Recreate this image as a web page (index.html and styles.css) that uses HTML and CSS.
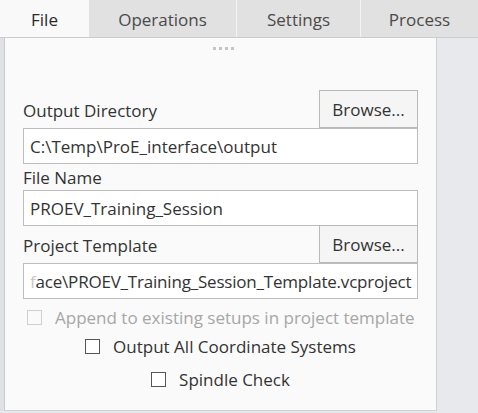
FILE: index.html
```html
<!DOCTYPE html>
<html lang="en">
<head>
    <meta charset="UTF-8">
    <title>Export Settings</title>
    <link rel="stylesheet" href="styles.css">
</head>
<body>

<!-- Tab bar -->
<div class="tabs">
    <div class="tab active tab-file">File</div>
    <div class="tab tab-ops">Operations</div>
    <div class="tab tab-settings">Settings</div>
    <div class="tab tab-process">Process</div>
</div>

<div class="main">
    <div class="strip"></div>
    <div class="panel">
        <!-- Grip -->
        <div class="grip"><span></span><span></span><span></span><span></span></div>

        <div class="row">
            <span class="label">Output Directory</span>
            <button class="browse" type="button">Browse...</button>
        </div>
        <div class="field">C:\Temp\ProE_interface\output</div>

        <div class="row row-plain">
            <span class="label">File Name</span>
        </div>
        <div class="field">PROEV_Training_Session</div>

        <div class="row">
            <span class="label">Project Template</span>
            <button class="browse" type="button">Browse...</button>
        </div>
        <div class="field tight"><span class="cut">f</span>ace\PROEV_Training_Session_Template.vcproject</div>

        <div class="check disabled">
            <span class="box"></span>
            <span>Append to existing setups in project template</span>
        </div>
        <div class="check centered first">
            <span class="box"></span>
            <span>Output All Coordinate Systems</span>
        </div>
        <div class="check centered last">
            <span class="box"></span>
            <span>Spindle Check</span>
        </div>
    </div>
</div>

</body>
</html>
```

FILE: styles.css
```css
body {
    margin: 0;
    font-family: "Open Sans", "Noto Sans", sans-serif;
    background-color: #e8e9ec;
    color: #333;
    width: 478px;
    height: 413px;
    overflow: hidden;
}
.tabs {
    display: flex;
    height: 37px;
    border-bottom: 1px solid #c9cdd1;
    background-color: #e1e1e1;
}
.tab {
    display: flex;
    align-items: center;
    justify-content: center;
    font-size: 17px;
    color: #4a4a4a;
    padding-top: 2px;
    box-sizing: border-box;
}
.tab.active {
    background-color: #f9f9f9;
    color: #2a2a2a;
}
.tab-file { width: 89px; }
.tab-ops { width: 148px; border-right: 1px solid #f4f4f4; }
.tab-settings { width: 124px; border-right: 1px solid #f4f4f4; }
.tab-process { flex: 1; }
.main {
    display: flex;
}
.strip {
    width: 4px;
    height: 373px;
    background-color: #dfe1e4;
    border-right: 1px solid #c8ccd0;
}
.panel {
    width: 432px;
    height: 373px;
    box-sizing: border-box;
    background-color: #fafafa;
    border-right: 1px solid #cfd2d5;
    border-bottom: 1px solid #cfd2d5;
    padding: 0 18px 0 18px;
}
.grip {
    display: flex;
    justify-content: center;
    gap: 3px;
    height: 53px;
    padding-top: 9px;
    box-sizing: border-box;
    padding-left: 6px;
}
.grip span {
    width: 3px;
    height: 3px;
    background-color: #c4c4c4;
}
.row {
    display: flex;
    align-items: center;
    justify-content: space-between;
    height: 37px;
}
.row-plain {
    height: 26px;
    align-items: flex-end;
    padding-bottom: 1px;
    box-sizing: border-box;
}
.label {
    font-size: 17px;
    color: #333;
    padding-top: 2px;
}
.browse {
    width: 99px;
    height: 38px;
    margin-top: 0;
    font-family: inherit;
    font-size: 17px;
    color: #333;
    background-color: #f5f5f5;
    border: 1px solid #b9b9b9;
    padding: 0;
    align-self: flex-end;
}
.field {
    height: 36px;
    box-sizing: border-box;
    border: 1px solid #bdbdbd;
    background-color: #ffffff;
    font-size: 17px;
    color: #333;
    padding: 0 0 0 6px;
    display: flex;
    align-items: center;
    white-space: nowrap;
    overflow: hidden;
}
.field.tight {
    letter-spacing: -0.2px;
}
.cut {
    color: #c8c8c8;
}
.check {
    display: flex;
    align-items: center;
    gap: 13px;
    font-size: 17px;
    color: #333;
    height: 30px;
}
.check.disabled {
    color: #a6a6a6;
    padding-left: 4px;
    margin-top: 3px;
}
.check.centered {
    justify-content: center;
}
.check.first {
    height: 28px;
}
.check.last {
    margin-top: 4px;
}
.box {
    width: 13px;
    height: 13px;
    border: 1px solid #555;
    background-color: #fff;
    flex: none;
}
.disabled .box {
    border-color: #cfcfcf;
    background-color: #fafafa;
}
```
